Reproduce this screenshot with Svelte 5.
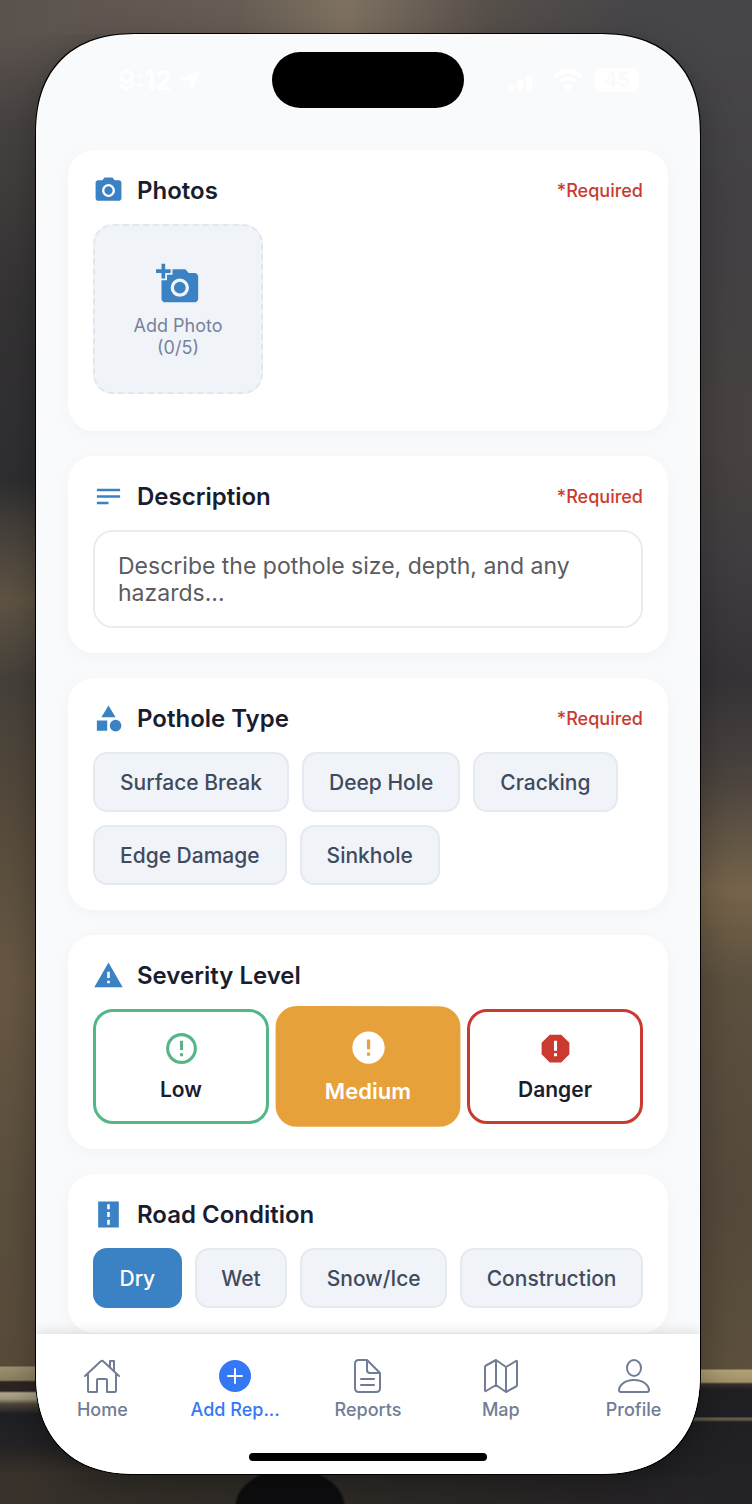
<script>
  const types = ['Surface Break', 'Deep Hole', 'Cracking', 'Edge Damage', 'Sinkhole'];
  const conditions = ['Dry', 'Wet', 'Snow/Ice', 'Construction'];
  let selectedTypes = $state([]);
  let severity = $state('Medium');
  let condition = $state('Dry');
  let description = $state('');

  function toggleType(t) {
    selectedTypes = selectedTypes.includes(t) ? selectedTypes.filter((x) => x !== t) : [...selectedTypes, t];
  }
</script>

{#snippet heading(title, path, required)}
  <header class="head">
    <svg class="head-icon" viewBox="0 0 24 24" aria-hidden="true"><path d={path} fill-rule="evenodd" /></svg>
    <h2>{title}</h2>
    {#if required}<span class="required">*Required</span>{/if}
  </header>
{/snippet}

<div class="scene">
  <div class="phone">
    <div class="status">
      <div class="clock">
        <span>9:12</span>
        <svg viewBox="0 0 22 22" width="22" height="22" aria-hidden="true"><path d="M21 1 1 10q-1 1 0 1.500H10.500V21q1 1 1.500 0Z" /></svg>
      </div>
      <div class="island"></div>
      <div class="signals">
        <svg viewBox="0 0 34 22" width="34" height="22" aria-hidden="true">
          <rect x="1" y="16" width="6" height="6" rx="1.500" /><rect x="10" y="11" width="6" height="11" rx="1.500" />
          <rect x="19" y="6" width="6" height="16" rx="1.500" /><rect x="28" y="0" width="6" height="22" rx="1.500" opacity=".2" />
        </svg>
        <svg viewBox="0 0 30 22" width="30" height="22" aria-hidden="true">
          <path d="M2 8Q15-4 28 8M7 13Q15 6 23 13" fill="none" stroke="#fff" stroke-width="4" /><path d="m10 17 5 5 5-5q-5-4-10 0Z" />
        </svg>
        <span class="battery">45</span>
      </div>
    </div>

    <main>
      <section class="card photos">
        {@render heading('Photos', 'M9 2 7.170 4H4C2.900 4 2 4.900 2 6V18C2 19.100 2.900 20 4 20H20C21.100 20 22 19.100 22 18V6C22 4.900 21.100 4 20 4H16.830L15 2ZM12 17A5 5 0 1 1 12 7A5 5 0 0 1 12 17ZM12 15.200A3.200 3.200 0 1 0 12 8.800A3.200 3.200 0 0 0 12 15.200Z', true)}
        <button class="add-photo" type="button">
          <svg viewBox="0 0 24 24" width="44" height="44" aria-hidden="true">
            <path fill-rule="evenodd" d="M3 4V1H5V4H8V6H5V9H3V6H0V4ZM6 10V7H9V4H16L17.830 6H21C22.100 6 23 6.900 23 8V20C23 21.100 22.100 22 21 22H5C3.900 22 3 21.100 3 20V10ZM13 19A5 5 0 1 0 13 9A5 5 0 0 0 13 19ZM13 17.200A3.200 3.200 0 1 1 13 10.800A3.200 3.200 0 0 1 13 17.200Z" />
          </svg>
          <span>Add Photo<br />(0/5)</span>
        </button>
      </section>

      <section class="card">
        {@render heading('Description', 'M3 18H12V16H3ZM3 6V8H21V6ZM3 13H21V11H3Z', true)}
        <textarea aria-label="Description" rows="2" placeholder="Describe the pothole size, depth, and any hazards..." bind:value={description}></textarea>
      </section>

      <section class="card">
        {@render heading('Pothole Type', 'M12 2 17.500 11H6.500ZM17.500 13A4.500 4.500 0 1 1 17.500 22A4.500 4.500 0 0 1 17.500 13ZM3 13.500H11V21.500H3Z', true)}
        <div class="chips">
          {#each types as t}
            <button type="button" class="chip" class:active={selectedTypes.includes(t)} aria-pressed={selectedTypes.includes(t)} onclick={() => toggleType(t)}>{t}</button>
          {/each}
        </div>
      </section>

      <section class="card">
        {@render heading('Severity Level', 'M1 21H23L12 2ZM13 18H11V16H13ZM13 14H11V9H13Z', false)}
        <div class="levels">
          <button type="button" class="level low" class:selected={severity === 'Low'} aria-pressed={severity === 'Low'} onclick={() => (severity = 'Low')}>
            <svg viewBox="0 0 24 24" aria-hidden="true"><path fill-rule="evenodd" d="M12 2A10 10 0 1 1 12 22A10 10 0 0 1 12 2ZM12 4A8 8 0 1 0 12 20A8 8 0 0 0 12 4ZM11 7H13V13H11ZM11 15H13V17H11Z" /></svg>
            <span>Low</span>
          </button>
          <button type="button" class="level medium" class:selected={severity === 'Medium'} aria-pressed={severity === 'Medium'} onclick={() => (severity = 'Medium')}>
            <svg viewBox="0 0 24 24" aria-hidden="true"><path fill-rule="evenodd" d="M12 2A10 10 0 1 1 12 22A10 10 0 0 1 12 2ZM11 7V13H13V7ZM11 15V17H13V15Z" /></svg>
            <span>Medium</span>
          </button>
          <button type="button" class="level danger" class:selected={severity === 'Danger'} aria-pressed={severity === 'Danger'} onclick={() => (severity = 'Danger')}>
            <svg viewBox="0 0 24 24" aria-hidden="true"><path fill-rule="evenodd" d="M15.730 3H8.270L3 8.270V15.730L8.270 21H15.730L21 15.730V8.270ZM11 7H13V13.500H11ZM11 15H13V17H11Z" /></svg>
            <span>Danger</span>
          </button>
        </div>
      </section>

      <section class="card">
        {@render heading('Road Condition', 'M4 2H20V22H4ZM11 4V8H13V4ZM11 10V14H13V10ZM11 16V20H13V16Z', false)}
        <div class="chips fill">
          {#each conditions as c}
            <button type="button" class="chip" class:active={condition === c} aria-pressed={condition === c} onclick={() => (condition = c)}>{c}</button>
          {/each}
        </div>
      </section>
    </main>

    <footer>
      <nav>
        <a href="#home">
          <svg viewBox="0 0 38 36" aria-hidden="true"><path d="M2 18 17.500 3.500Q19 2 20.500 3.500L36 18M5 15V33Q5 34 6 34H14V22Q14 21 15 21H23Q24 21 24 22V34H32Q33 34 33 33V15M27 9V3H31V13" /></svg>
          <span>Home</span>
        </a>
        <a href="#add" class="current" aria-current="page">
          <svg viewBox="0 0 38 36" aria-hidden="true"><circle cx="19" cy="18" r="16" fill="currentColor" stroke="none" /><path d="M12 18H26M19 11V25" stroke="#fff" /></svg>
          <span>Add Rep...</span>
        </a>
        <a href="#reports">
          <svg viewBox="0 0 38 36" aria-hidden="true"><path d="M10 2H17Q18 2 19 3L30 14Q31 15 31 16V30Q31 34 27 34H10Q6 34 6 30V6Q6 2 10 2ZM18 2V12Q18 15 21 15H31M12 21H25M12 27H25" /></svg>
          <span>Reports</span>
        </a>
        <a href="#map">
          <svg viewBox="0 0 38 36" aria-hidden="true"><path d="M14 2 24 9 34 3Q35 2.500 35 4V27Q35 28 34 28.500L24 34 14 27 4 33Q3 33.500 3 32V9Q3 8 4 7.500ZM14 2V27M24 9V34" /></svg>
          <span>Map</span>
        </a>
        <a href="#profile">
          <svg viewBox="0 0 38 36" aria-hidden="true"><ellipse cx="19" cy="10" rx="7" ry="8" /><path d="M19 22C9 22 4 28 4 32Q4 34 6 34H32Q34 34 34 32C34 28 29 22 19 22Z" /></svg>
          <span>Profile</span>
        </a>
      </nav>
      <div class="home-bar"></div>
    </footer>
  </div>
</div>

<style>
  /* Blurred roadside backdrop: a patch and the strips above and below the phone, then the two sides. */
  .scene {
    box-sizing: border-box;
    min-height: 100vh;
    padding: 34px 52px 30px 36px;
    font-family: Inter, 'Liberation Sans', sans-serif;
    background:
      radial-gradient(ellipse 56px 38px at 290px calc(100% + 2px), #0e0e10 94%, transparent 100%) no-repeat,
      linear-gradient(90deg, #5a524d, #675d54 32%, #7e7161 46%, #564f4a 65%, #464548 85%) 0 0 / 100% 34px no-repeat,
      linear-gradient(90deg, #38322b, #2e2a26 50%, #222126) 0 100% / 100% 29px no-repeat,
      linear-gradient(#5a524d 34px, #454140 130px, #353334 300px, #2e2d30 480px, #45403a 530px, #5f5444 600px, #45403a 680px, #50473a 770px, #685843 980px, #5a4e3d 1200px, #594b3b 1366px, #9c9170 1367px, #8b8060 1380px, #2c2522 1382px, #2c2522 1391px, #b0a88c 1393px, #a0967a 1399px, #4f463b 1404px, #1f1f24 1414px, #242225 1445px, #38322b 1475px) 0 0 / 50% 100% no-repeat,
      linear-gradient(#464548 34px, #434146 200px, #47423f 450px, #403d40 560px, #353337 680px, #4b443e 780px, #76644a 890px, #5c503f 980px, #54493b 1200px, #5c4f3c 1369px, #b0a176 1370px, #a09168 1382px, #3a3028 1384px, #202024 1389px, #202024 1417px, #6a604c 1418px, #5c5444 1420px, #1f1f24 1422px, #222126 1475px) 100% 0 / 50% 100% no-repeat;
  }

  .phone {
    display: flex;
    flex-direction: column;
    overflow: hidden;
    border-radius: 88px;
    background: #f8fafc;
    box-shadow: 0 0 0 1px #000, 0 12px 36px rgba(0, 0, 0, 0.3);
  }
  @supports (corner-shape: superellipse(1.25)) {
    .phone {
      border-radius: 102px;
      corner-shape: superellipse(1.25);
    }
  }

  .status {
    display: grid;
    grid-template-columns: 1fr 192px 1fr;
    align-items: center;
    padding: 18px 0 42px;
    color: #fff;
    fill: #fff;
  }
  .clock,
  .signals {
    display: flex;
    align-items: center;
    justify-content: center;
    gap: 8px;
    font-size: 27px;
    font-weight: 600;
  }
  .clock { padding-left: 12px; }
  .signals {
    gap: 12px;
    padding-right: 18px;
  }
  .island {
    height: 56px;
    border-radius: 28px;
    background: #000;
  }
  .battery {
    padding: 0 9px;
    border-radius: 8px;
    background: #fff;
    color: #f8fafc;
    font-size: 20px;
    line-height: 24px;
  }

  main {
    display: flex;
    flex-direction: column;
    gap: 25px;
    padding: 0 32px 1px;
  }
  .card {
    padding: 24px 25px 25px;
    border-radius: 26px;
    background: #fff;
    box-shadow: 0 3px 16px rgba(30, 40, 60, 0.03);
  }
  .photos { padding-bottom: 37px; }

  .head {
    display: flex;
    align-items: center;
    height: 32px;
    margin-bottom: 18px;
  }
  .head-icon {
    width: 31px;
    height: 31px;
    margin-right: 13px;
    fill: #3b82c4;
  }
  h2 {
    margin: 0;
    color: #1a1d2e;
    font-size: 24px;
    font-weight: 600;
  }
  .required {
    margin-left: auto;
    color: #cb3a31;
    font-size: 18px;
    font-weight: 500;
  }

  button { font-family: inherit; cursor: pointer; }

  .add-photo {
    display: flex;
    flex-direction: column;
    align-items: center;
    justify-content: center;
    gap: 9px;
    width: 170px;
    height: 170px;
    padding: 2px 0 0;
    border: 2px dashed #e2e6ee;
    border-radius: 20px;
    background: #f0f4f8;
    color: #77829a;
    font-size: 18px;
    line-height: 22px;
  }
  .add-photo svg { fill: #3b82c4; }

  textarea {
    display: block;
    box-sizing: border-box;
    width: 100%;
    height: 98px;
    padding: 21px 23px;
    border: 2px solid #e8ebf2;
    border-radius: 20px;
    background: #fff;
    color: #1a1d2e;
    font: 400 23px/27px Inter, 'Liberation Sans', sans-serif;
    resize: none;
  }
  textarea::placeholder { color: #5b5b60; opacity: 1; }

  .chips {
    display: flex;
    flex-wrap: wrap;
    gap: 13px;
  }
  .chip {
    height: 60px;
    padding: 0 25px;
    border: 2px solid #e5e9f0;
    border-radius: 14px;
    background: #f0f4f8;
    color: #404a5f;
    font-size: 21px;
    font-weight: 500;
    white-space: nowrap;
  }
  .fill .chip {
    flex: 1 0 auto;
    padding: 0 24px;
  }
  .chip.active {
    border-color: #3b82c4;
    background: #3b82c4;
    color: #fff;
  }

  .levels {
    display: grid;
    grid-template-columns: repeat(3, 1fr);
    gap: 11px;
  }
  .level {
    display: flex;
    flex-direction: column;
    align-items: center;
    justify-content: center;
    gap: 9px;
    height: 115px;
    padding: 1px 0 0;
    border: 3px solid var(--tone);
    border-radius: 20px;
    background: #fff;
    color: #1a1d2e;
    font-size: 21px;
    font-weight: 600;
    line-height: 28px;
  }
  .level svg {
    width: 37px;
    height: 37px;
    fill: var(--tone);
  }
  .low { --tone: #55b685; }
  .medium { --tone: #e7a13b; }
  .danger { --tone: #cb3a31; }
  .level.selected {
    background: var(--tone);
    color: #fff;
    transform: scale(1.05);
  }
  .level.selected svg { fill: #fff; }

  footer {
    position: relative;
    padding: 24px 0 13px;
    background: #fff;
    box-shadow: 0 -2px 12px rgba(0, 0, 0, 0.12);
  }
  nav {
    display: grid;
    grid-template-columns: repeat(5, 1fr);
    margin-bottom: 32px;
  }
  nav a {
    display: flex;
    flex-direction: column;
    align-items: center;
    gap: 4px;
    color: #717d95;
    font-size: 18px;
    font-weight: 500;
    line-height: 23px;
    text-decoration: none;
  }
  nav a.current { color: #3478f6; }
  nav svg {
    width: 38px;
    height: 36px;
    fill: none;
    stroke: currentColor;
    stroke-width: 2;
    stroke-linecap: round;
    stroke-linejoin: round;
  }
  .home-bar {
    width: 238px;
    height: 8px;
    margin: 0 auto;
    border-radius: 4px;
    background: #000;
  }
</style>
